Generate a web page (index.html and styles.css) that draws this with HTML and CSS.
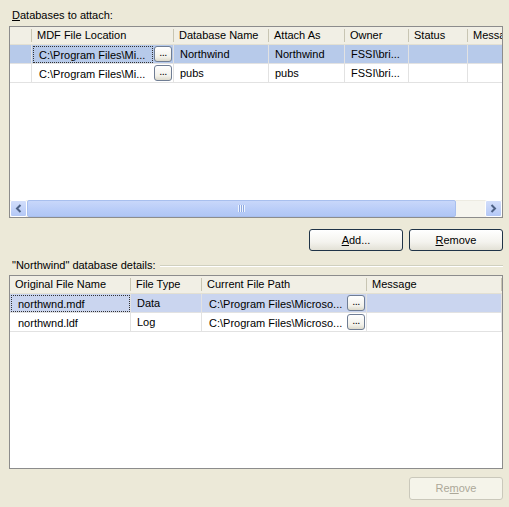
FILE: index.html
```html
<!DOCTYPE html>
<html>
<head>
<meta charset="utf-8">
<link rel="stylesheet" href="styles.css">
</head>
<body>
<div class="page">
  <div class="label"><u>D</u>atabases to attach:</div>
  <div class="grid grid-top">
    <div class="row head">
      <div class="c rh"></div>
      <div class="c t1">MDF File Location</div>
      <div class="c t2">Database Name</div>
      <div class="c t3">Attach As</div>
      <div class="c t4">Owner</div>
      <div class="c t5">Status</div>
      <div class="c t6">Message</div>
    </div>
    <div class="row sel-top">
      <div class="c rh"></div>
      <div class="c t1 withbtn"><span class="txt focus">C:\Program Files\Mi...</span><span class="ell">...</span></div>
      <div class="c t2">Northwind</div>
      <div class="c t3">Northwind</div>
      <div class="c t4">FSSI\bri...</div>
      <div class="c t5"></div>
      <div class="c t6"></div>
    </div>
    <div class="row">
      <div class="c rh"></div>
      <div class="c t1 withbtn"><span class="txt">C:\Program Files\Mi...</span><span class="ell">...</span></div>
      <div class="c t2">pubs</div>
      <div class="c t3">pubs</div>
      <div class="c t4">FSSI\bri...</div>
      <div class="c t5"></div>
      <div class="c t6"></div>
    </div>
    <div class="fill"></div>
    <div class="hscroll">
      <div class="arrow"><svg width="7" height="9" viewBox="0 0 7 9"><path d="M5.5 1 L2 4.5 L5.5 8" fill="none" stroke="#4D6185" stroke-width="2"/></svg></div>
      <div class="thumb"><span class="grip"></span></div>
      <div class="track"></div>
      <div class="arrow"><svg width="7" height="9" viewBox="0 0 7 9"><path d="M1.5 1 L5 4.5 L1.5 8" fill="none" stroke="#4D6185" stroke-width="2"/></svg></div>
    </div>
  </div>
  <div class="btnrow">
    <div class="btn"><u>A</u>dd...</div>
    <div class="btn"><u>R</u>emove</div>
  </div>
  <div class="group">
    <span class="gtext">"Northwind" database details:</span>
    <span class="gline"></span>
  </div>
  <div class="grid grid-bottom">
    <div class="row head">
      <div class="c b1">Original File Name</div>
      <div class="c b2">File Type</div>
      <div class="c b3">Current File Path</div>
      <div class="c b4">Message</div>
    </div>
    <div class="row sel-bottom">
      <div class="c b1 first"><span class="txt focus">northwnd.mdf</span></div>
      <div class="c b2">Data</div>
      <div class="c b3 withbtn"><span class="txt">C:\Program Files\Microso...</span><span class="ell">...</span></div>
      <div class="c b4"></div>
    </div>
    <div class="row">
      <div class="c b1 first"><span class="txt">northwnd.ldf</span></div>
      <div class="c b2">Log</div>
      <div class="c b3 withbtn"><span class="txt">C:\Program Files\Microso...</span><span class="ell">...</span></div>
      <div class="c b4"></div>
    </div>
    <div class="fill"></div>
  </div>
  <div class="btnrow last">
    <div class="btn disabled">Re<u>m</u>ove</div>
  </div>
</div>
</body>
</html>
```

FILE: styles.css
```css
html, body {
  margin: 0;
  padding: 0;
  background: #ECE9D8;
}
body {
  width: 509px;
  height: 507px;
  overflow: hidden;
  font-family: "Liberation Sans", Arial, sans-serif;
  font-size: 11px;
  color: #000;
}
.page {
  display: flex;
  flex-direction: column;
  padding: 9px 6px 0 9px;
}
.label {
  height: 13px;
  line-height: 13px;
  padding-left: 3px;
  margin-bottom: 4px;
}
.grid {
  display: flex;
  flex-direction: column;
  background: #fff;
  border: 1px solid #8C8C8C;
  overflow: hidden;
}
.grid-top { height: 190px; }
.grid-bottom { height: 192px; margin-top: 3px; }
.row {
  display: flex;
  flex: none;
  height: 19px;
  background: #fff;
  white-space: nowrap;
}
.row.head {
  height: 18px;
  background: #F1EFE5;
}
.c {
  flex: none;
  box-sizing: border-box;
  height: 100%;
  border-right: 1px solid #E2E2E2;
  border-bottom: 1px solid #E2E2E2;
  padding-left: 6px;
  line-height: 18px;
  overflow: hidden;
}
.head .c {
  border-right: none;
  border-bottom: 1px solid #E3E0D2;
  padding-left: 5px;
  line-height: 17px;
  background-image: linear-gradient(#C8C5B3, #C8C5B3);
  background-repeat: no-repeat;
  background-size: 1px 13px;
  background-position: right 2px;
}
.rh { width: 22px; padding: 0; }
.t1 { width: 142px; }
.t2 { width: 95px; }
.t3 { width: 76px; }
.t4 { width: 64px; }
.t5 { width: 59px; }
.t6 { width: 100px; }
.b1 { width: 121px; }
.b2 { width: 71px; }
.b3 { width: 165px; }
.b4 { width: 135px; }
.sel-top { background: #B7CAEA; }
.sel-bottom { background: #CAD5EF; }
.withbtn {
  display: flex;
  align-items: center;
  padding-left: 1px;
}
.withbtn .txt {
  flex: 1;
  padding-left: 5px;
}
.b3.withbtn .txt { padding-left: 5px; }
.first { padding-left: 1px; display: flex; align-items: center; }
.first .txt { flex: 1; padding-left: 6px; }
.txt {
  box-sizing: border-box;
  height: 17px;
  line-height: 17px;
  border: 1px solid transparent;
}
.txt.focus { border: 1px dotted #333; }
.ell {
  flex: none;
  box-sizing: border-box;
  width: 18px;
  height: 16px;
  margin: 0 1px 0 1px;
  border: 1px solid #6F7D94;
  border-radius: 3px;
  background: linear-gradient(#FFFFFF, #F2F1EA 70%, #DCD9CB);
  text-align: center;
  line-height: 11px;
  font-size: 11px;
  letter-spacing: -0.5px;
}
.fill { flex: 1; background: #fff; }
.hscroll {
  flex: none;
  height: 17px;
  display: flex;
  background: #F3F1EA;
}
.arrow {
  box-sizing: border-box;
  width: 17px;
  height: 17px;
  border: 1px solid #fff;
  border-radius: 2px;
  background: linear-gradient(#D2DEFB, #B4C8F6);
  display: flex;
  align-items: center;
  justify-content: center;
}
.thumb {
  box-sizing: border-box;
  width: 429px;
  height: 17px;
  border: 1px solid #A8BFEE;
  border-radius: 2px;
  background: linear-gradient(#C8D7FA, #B8CCF8 60%, #B0C6F5);
  display: flex;
  align-items: center;
  justify-content: center;
}
.grip {
  width: 7px;
  height: 7px;
  background: repeating-linear-gradient(90deg, #EEF4FE 0 1px, #8FA9E0 1px 2px);
}
.track {
  flex: 1;
  background: #F6F5EF;
  border-top: 1px solid #EDEBE2;
}
.btnrow {
  display: flex;
  justify-content: flex-end;
  gap: 6px;
  margin-top: 11px;
}
.btnrow.last { margin-top: 8px; }
.btn {
  box-sizing: border-box;
  width: 94px;
  height: 22px;
  border: 1px solid #1F3347;
  border-radius: 3px;
  background: linear-gradient(#FFFFFF, #F4F3EE 60%, #E3E1D6);
  text-align: center;
  line-height: 20px;
}
.btn.disabled {
  height: 23px;
  border-color: #CAC8BB;
  background: #F5F4EA;
  color: #ACA899;
}
.group {
  display: flex;
  align-items: center;
  margin-top: 8px;
  height: 13px;
}
.gtext {
  padding-left: 3px;
  padding-right: 4px;
  line-height: 13px;
}
.gline {
  flex: 1;
  height: 0;
  border-top: 1px solid #D0D0BF;
  border-bottom: 1px solid #fff;
}
```
